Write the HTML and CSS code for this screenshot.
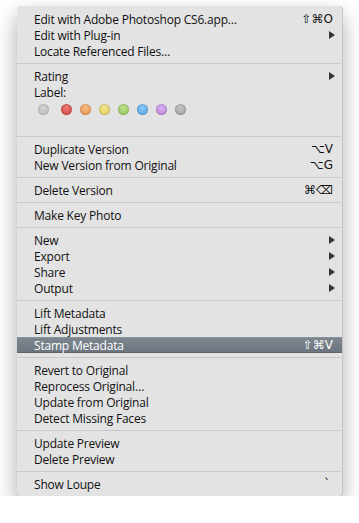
FILE: index.html
```html
<!DOCTYPE html>
<html lang="en">

<head>
    <meta charset="UTF-8" />
    <title>Photo Context Menu</title>
    <link rel="stylesheet" href="styles.css">
</head>

<body>
    <div class="menu">
        <div class="item"><span class="label">Edit with Adobe Photoshop CS6.app…</span><span class="key">⇧⌘O</span></div>
        <div class="item"><span class="label">Edit with Plug-in</span><span class="arrow"></span></div>
        <div class="item"><span class="label">Locate Referenced Files…</span></div>
        <div class="sep"></div>

        <div class="item"><span class="label">Rating</span><span class="arrow"></span></div>
        <div class="item"><span class="label">Label:</span></div>
        <div class="dots">
            <span class="dot none"></span>
            <span class="dot red"></span>
            <span class="dot orange"></span>
            <span class="dot yellow"></span>
            <span class="dot green"></span>
            <span class="dot blue"></span>
            <span class="dot purple"></span>
            <span class="dot grey"></span>
        </div>
        <div class="sep"></div>

        <div class="item"><span class="label">Duplicate Version</span><span class="key">⌥V</span></div>
        <div class="item"><span class="label">New Version from Original</span><span class="key">⌥G</span></div>
        <div class="sep"></div>

        <div class="item"><span class="label">Delete Version</span><span class="key">⌘⌫</span></div>
        <div class="sep"></div>

        <div class="item"><span class="label">Make Key Photo</span></div>
        <div class="sep"></div>

        <div class="item"><span class="label">New</span><span class="arrow"></span></div>
        <div class="item"><span class="label">Export</span><span class="arrow"></span></div>
        <div class="item"><span class="label">Share</span><span class="arrow"></span></div>
        <div class="item"><span class="label">Output</span><span class="arrow"></span></div>
        <div class="sep"></div>

        <div class="item"><span class="label">Lift Metadata</span></div>
        <div class="item"><span class="label">Lift Adjustments</span></div>
        <div class="item selected"><span class="label">Stamp Metadata</span><span class="key">⇧⌘V</span></div>
        <div class="sep"></div>

        <div class="item"><span class="label">Revert to Original</span></div>
        <div class="item"><span class="label">Reprocess Original…</span></div>
        <div class="item"><span class="label">Update from Original</span></div>
        <div class="item"><span class="label">Detect Missing Faces</span></div>
        <div class="sep"></div>

        <div class="item"><span class="label">Update Preview</span></div>
        <div class="item"><span class="label">Delete Preview</span></div>
        <div class="sep"></div>

        <div class="item"><span class="label">Show Loupe</span><span class="key tick">`</span></div>
    </div>
</body>

</html>
```

FILE: styles.css
```css
body {
    margin: 0;
    padding: 6px 0 0 17px;
    background: #ffffff;
    font-family: "Open Sans", "DejaVu Sans", sans-serif;
}

.menu {
    width: 325px;
    padding: 5px 0 4px 0;
    background: #e3e3e3;
    border-radius: 4px;
    box-shadow: 1px 0 0 #c6c6c6, 0 1px 0 #c6c6c6, 0 10px 22px rgba(0, 0, 0, 0.35);
}

.item {
    display: flex;
    align-items: center;
    justify-content: space-between;
    height: 16px;
    padding: 0 9px 0 17px;
    font-size: 12px;
    letter-spacing: -0.2px;
    color: #111;
}

.label {
    white-space: nowrap;
}

.key {
    font-family: "DejaVu Sans", sans-serif;
    font-size: 12px;
    letter-spacing: 0;
}

.key.tick {
    margin-right: 3px;
}

.arrow {
    width: 0;
    height: 0;
    margin-right: -2px;
    border-left: 6px solid #333;
    border-top: 4px solid transparent;
    border-bottom: 4px solid transparent;
}

.item.selected {
    background: linear-gradient(to bottom, #8b929c 0, #8b929c 1px, #7d858f 1px, #6d7580 15px, #5b636d 15px);
    color: #fff;
}

.sep {
    height: 1px;
    margin: 4px 1px 4px 0;
    background: #c9c9c9;
}

/* label colours */
.dots {
    display: flex;
    gap: 8px;
    height: 11px;
    padding: 4px 0 17px 21px;
}

.dot {
    width: 11px;
    height: 11px;
    border-radius: 50%;
    box-shadow: inset 0 0 0 1px rgba(0, 0, 0, 0.12);
}

.dot.none {
    margin-right: 4px;
    background: radial-gradient(circle at 50% 35%, #d2d2d2, #bcbcbc);
}

.dot.red {
    background: radial-gradient(circle at 50% 35%, #ec7a76, #cc3b38);
}

.dot.orange {
    background: radial-gradient(circle at 50% 35%, #f8bc88, #e58a45);
}

.dot.yellow {
    background: radial-gradient(circle at 50% 35%, #f4e58e, #dcc953);
}

.dot.green {
    background: radial-gradient(circle at 50% 35%, #bde08a, #8cc052);
}

.dot.blue {
    background: radial-gradient(circle at 50% 35%, #8cc8f4, #4a9ee2);
}

.dot.purple {
    background: radial-gradient(circle at 50% 35%, #dab2ee, #b47ad6);
}

.dot.grey {
    background: radial-gradient(circle at 50% 35%, #c4c4c4, #9c9c9c);
}
```
